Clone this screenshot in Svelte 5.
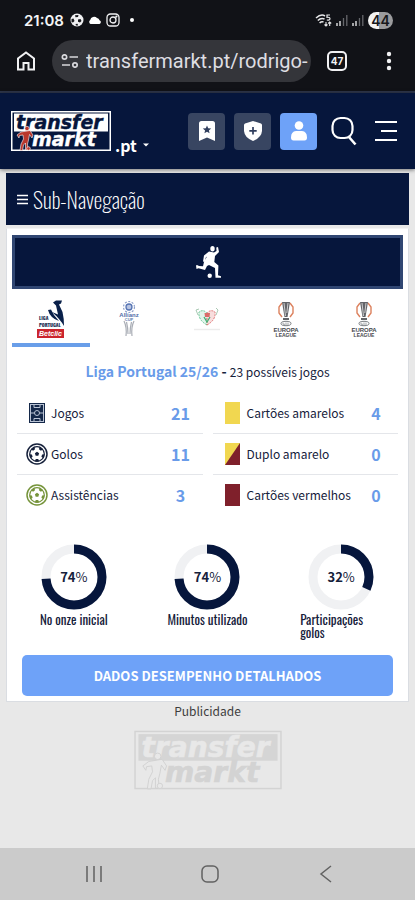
<script>
  let activeTab = $state(0);

  const url = 'transfermarkt.pt/rodrigo-';

  const tabs = [
    { logo: 'liga', label: 'Liga Portugal' },
    { logo: 'allianz', label: 'Allianz Cup' },
    { logo: 'taca', label: 'Taça de Portugal' },
    { logo: 'europa', label: 'Europa League' },
    { logo: 'europa', label: 'Europa League' }
  ];

  const columns = [
    [
      { icon: 'pitch', label: 'Jogos', value: 21 },
      { icon: 'ball', label: 'Golos', value: 11 },
      { icon: 'assist', label: 'Assistências', value: 3 }
    ],
    [
      { icon: 'yellow', label: 'Cartões amarelos', value: 4 },
      { icon: 'double', label: 'Duplo amarelo', value: 0 },
      { icon: 'red', label: 'Cartões vermelhos', value: 0 }
    ]
  ];

  const charts = [
    { label: 'No onze inicial', percent: 74 },
    { label: 'Minutos utilizado', percent: 74 },
    { label: 'Participações golos', percent: 32 }
  ];

  const spokes = [0, 72, 144, 216, 288];
</script>

{#snippet kicker()}
  <path d="M10 21 L19 19.5 L22 24 L21 27 L18.5 23.5 L17.5 29 L16.5 33 L17 39 L14.5 39 L14.5 32 L12.5 34 L11.5 39.5 L9 39.5 L10 33 L12.5 28 L12 24 L8.5 24.5 L8 27 L6 24 Z" />
  <circle cx="16" cy="17.5" r="2.2" />
  <circle cx="17.5" cy="37.5" r="1.8" />
{/snippet}

<div class="screen">
  <header class="phone">
    <div class="status">
      <span class="clock">21:08</span>
      <svg width="14" height="14" viewBox="0 0 14 14">
        <circle cx="7" cy="7" r="6.5" fill="#f1f1f3" />
        <path d="M5 2.2 L8.5 2 L8 4 L5.5 4.2 Z M1.5 6 L3.5 5.5 L4.5 8 L3 9.5 L1.5 9 Z M8 6.5 L10.5 6 L11.5 8 L10 9.5 L8 8.8 Z M5.5 11 L7.5 10.8 L8.2 12.5 L6 12.6 Z" fill="#17181c" />
      </svg>
      <svg width="14" height="10" viewBox="0 0 14 10">
        <path d="M2.5 9 A2.3 2.3 0 0 1 2.2 5 A4 4 0 0 1 9 3 A3 3 0 0 1 11.5 5.2 A2 2 0 0 1 11.5 9 Z" fill="#fff" />
      </svg>
      <svg width="14" height="14" viewBox="0 0 14 14" fill="none" stroke="#f1f1f3" stroke-width="1.3">
        <rect x="1" y="1" width="12" height="12" rx="3.5" />
        <circle cx="7" cy="7" r="3" />
        <circle cx="10.4" cy="3.6" r="0.5" fill="#fff" />
      </svg>
      <span class="dot"></span>
      <span class="spacer"></span>
      <svg width="17" height="13" viewBox="0 0 17 13" fill="none" stroke="#e8e8ea" stroke-width="1.5">
        <path d="M1 4 Q6 -0.5 10 2 M2.8 6.5 Q6 3.5 9.5 5 M4.6 9 Q6.5 7.2 8.5 8" />
        <path d="M15 1 H12 V3.3 Q15 3 15 4.7 Q15 6.3 11.8 6" stroke-width="1.2" />
        <path d="M11 8 V12 M9.5 10.5 L11 12 L12.5 10.5 M14.7 12 V8 M13.2 9.5 L14.7 8 L16.2 9.5" stroke-width="1.1" />
      </svg>
      <svg width="12" height="12" viewBox="0 0 12 12">
        <path d="M1 9 V12 M4 7 V12" stroke="#f1f1f3" stroke-width="1.3" />
        <path d="M7.5 4 V12 M10.8 1 V12" stroke="#66676c" stroke-width="1.3" />
      </svg>
      <svg width="12" height="12" viewBox="0 0 12 12">
        <path d="M1 9 V12 M4 7 V12" stroke="#f1f1f3" stroke-width="1.3" />
        <path d="M7.5 4 V12 M10.8 1 V12" stroke="#66676c" stroke-width="1.3" />
      </svg>
      <span class="battery">44</span>
    </div>

    <div class="browser">
      <button class="plain" aria-label="Página inicial">
        <svg width="20" height="20" viewBox="0 0 20 20" fill="none" stroke="#f1f1f3" stroke-width="2">
          <path d="M2 18.5 V7.5 L10 1.5 L18 7.5 V18.5 H12.5 V12 H7.5 V18.5 Z" />
        </svg>
      </button>
      <label class="address">
        <svg width="18" height="14" viewBox="0 0 18 14" fill="none" stroke="#d8d8dc" stroke-width="1.7">
          <circle cx="3.5" cy="3" r="2.2" />
          <path d="M8.5 3 H17 M1 11 H9" />
          <circle cx="14" cy="11" r="2.2" />
        </svg>
        <input type="text" value={url} aria-label="Endereço" />
      </label>
      <button class="tabcount">47</button>
      <button class="plain" aria-label="Menu do navegador">
        <svg width="6" height="20" viewBox="0 0 6 20" fill="#f1f1f3">
          <circle cx="3" cy="3" r="2.2" />
          <circle cx="3" cy="10" r="2.2" />
          <circle cx="3" cy="17" r="2.2" />
        </svg>
      </button>
    </div>
  </header>

  <nav class="site">
    <a href="/" class="logo" aria-label="Transfermarkt">
      <svg width="100" height="40" viewBox="0 0 100 40">
        <rect width="100" height="40" fill="#fff" />
        <rect x="1.5" y="1.5" width="97" height="37" fill="#06163c" />
        <rect x="3" y="2.5" width="94" height="18" fill="#fff" />
        <text x="5" y="18" class="mark" fill="#06163c" stroke="#06163c" stroke-width="0.4">transfer</text>
        <text x="21" y="35" class="mark" fill="#fff" stroke="#fff" stroke-width="0.4">markt</text>
        <g fill="#b9372c" stroke="#fff" stroke-width="0.6">{@render kicker()}</g>
      </svg>
    </a>
    <button class="country">.pt
      <svg width="6" height="4" viewBox="0 0 6 4"><path d="M0 0.5 H6 L3 3.5 Z" fill="#fff" /></svg>
    </button>
    <div class="tools">
      <button class="tool" aria-label="Favoritos">
        <svg width="16" height="20" viewBox="0 0 16 20">
          <path d="M2.5 0 H13.5 Q16 0 16 2.5 V20 L8 16.5 L0 20 V2.5 Q0 0 2.5 0 Z" fill="#fff" />
          <path d="M8 4.5 L9.2 7.3 L12.2 7.5 L9.9 9.4 L10.6 12.3 L8 10.7 L5.4 12.3 L6.1 9.4 L3.8 7.5 L6.8 7.3 Z" fill="#303e5e" />
        </svg>
      </button>
      <button class="tool" aria-label="Clube">
        <svg width="18" height="20" viewBox="0 0 18 20">
          <path d="M9 0 L17 2.5 Q18 3 18 4 V10 Q17.5 16.5 9 20 Q0.5 16.5 0 10 V4 Q0 3 1 2.5 Z" fill="#fff" />
          <path d="M9 6 V13.5 M5.3 9.8 H12.7" stroke="#303e5e" stroke-width="1.7" />
        </svg>
      </button>
      <button class="tool user" aria-label="Conta">
        <svg width="16" height="20" viewBox="0 0 16 20" fill="#fff">
          <circle cx="8" cy="4.5" r="4.3" />
          <path d="M5 10 H11 Q16 10.5 16 16.5 Q16 19.5 13.5 19.5 H2.5 Q0 19.5 0 16.5 Q0 10.5 5 10 Z" />
        </svg>
      </button>
      <button class="plain" aria-label="Procurar">
        <svg width="26" height="30" viewBox="0 0 26 30" fill="none" stroke="#fff" stroke-width="2.2">
          <rect x="1.5" y="2" width="20" height="20" rx="8" />
          <path d="M17.5 20.5 L24.5 28.5" stroke-width="2.6" />
        </svg>
      </button>
      <button class="plain menu" aria-label="Menu">
        <svg width="22" height="22" viewBox="0 0 22 22" stroke="#fff" stroke-width="2">
          <path d="M0 2 H22 M6 11 H22 M0 20 H22" />
        </svg>
      </button>
    </div>
  </nav>

  <main>
    <button class="subnav">
      <svg width="11" height="11" viewBox="0 0 11 11" stroke="#fff" stroke-width="1.6">
        <path d="M0 1.5 H11 M0 5.5 H11 M0 9.5 H11" />
      </svg>
      Sub-Navegação
    </button>

    <section class="card">
      <div class="position">
        <svg width="26" height="34" viewBox="0 0 26 34" fill="#fff">
          <ellipse cx="17.5" cy="3.8" rx="2.2" ry="2.7" />
          <path d="M14 6.5 L19 7.5 L21.5 6 L21.3 2.5 L23 2 L24 7 L20 11 L19.3 17 L23.4 20.5 L23 30.2 L26 31.2 L26 32.8 L20.5 32.8 L20 23 L14 20 L12 21 L10 25 L3.5 23.2 L1.5 24 L1 20.5 L2 20 L4 21 L8 21.3 L9 17 L12 11.5 L10.8 12.5 L9.6 17 L8 16.5 L9 10.5 Z" />
          <circle cx="14.7" cy="30.8" r="2.2" />
        </svg>
      </div>

      <div class="tabs">
        {#each tabs as tab, i}
          <button class="tab" class:active={activeTab === i} aria-label={tab.label} onclick={() => (activeTab = i)}>
            <svg width="30" height="40" viewBox="0 0 30 40">
              {#if tab.logo === 'liga'}
                <path d="M17 3.5 L20 1.5 H26 L25 4.5 L23 5.5 L26.5 13 Q28 19 28 27 Q24 20 16 13 L22 15.5 L20 6.5 Z" fill="#09204a" />
                <path d="M12 11 L15 10.5 L18 16 L23 22 Q14 19 12 11 Z" fill="#09204a" />
                <text x="3" y="21" class="liga" fill="#16294e">LIGA</text>
                <text x="3" y="28" class="liga" fill="#16294e">PORTUGAL</text>
                <rect x="1" y="30" width="27" height="9" fill="#cb252d" />
                <text x="3" y="37" class="betclic" fill="#fff">Betclic</text>
              {:else if tab.logo === 'allianz'}
                <circle cx="15" cy="8" r="3" fill="#b9c5e2" stroke="#5573b3" stroke-width="1.3" />
                <circle cx="15" cy="8" r="5.5" fill="none" stroke="#8ea0cb" stroke-width="1.2" stroke-dasharray="2 1.5" />
                <text x="15" y="18" class="tiny" fill="#526da8" text-anchor="middle">Allianz</text>
                <text x="15" y="22" class="cup" fill="#667db0" text-anchor="middle">CUP</text>
                <path d="M10 22 Q13 28 12 37 M12.5 23 Q14 29 14 35 M17.5 23 Q16 29 16 35 M20 22 Q17 28 18 37" fill="none" stroke="#a9adb5" stroke-width="1.2" />
              {:else if tab.logo === 'taca'}
                <path d="M15 26 Q6 21 7 13 Q11 10 15 14 Z" fill="#e2f4ea" stroke="#61c690" stroke-width="1" stroke-dasharray="2 1" />
                <path d="M15 26 Q24 21 23 13 Q19 10 15 14 Z" fill="#f8dddd" stroke="#df7273" stroke-width="1" stroke-dasharray="2 1" />
                <path d="M6 16 L4 11 L7 10 M24 16 L26 11 L24 9" fill="none" stroke="#94bba1" stroke-width="0.8" />
                <path d="M12.5 14 H18 L17.5 18 H13 Z" fill="#da6c69" />
                <path d="M12 18 L15 23 L18 18" fill="none" stroke="#42ad74" stroke-width="1.3" />
                <path d="M2 30.5 H28" stroke="#ececec" stroke-width="1.5" />
              {:else}
                <path d="M11 4 L8 8 V14 L11 18 M19 4 L22 8 V14 L19 18" fill="none" stroke="#dc815d" stroke-width="1.4" />
                <path d="M11 3 H19 L17.5 12 L16.5 18 H13.5 L12.5 12 Z" fill="#626469" />
                <path d="M13 4 L14.5 17 M17 4 L15.8 14" stroke="#e8e8e8" stroke-width="0.8" />
                <path d="M12 20 H18" stroke="#33353a" stroke-width="1.5" />
                <ellipse cx="15" cy="24.5" rx="5" ry="2.2" fill="none" stroke="#777b80" stroke-width="1" />
                <path d="M12 23.5 V25 Q13 26 14 25 M15 23.5 V26 M17 23.5 V26" fill="none" stroke="#777b80" stroke-width="0.7" />
                <text x="15" y="33" class="tiny" fill="#46484d" text-anchor="middle">EUROPA</text>
                <text x="15" y="38" class="tiny small" fill="#46484d" text-anchor="middle">LEAGUE</text>
              {/if}
            </svg>
          </button>
        {/each}
      </div>

      <h2><a href="/liga">Liga Portugal 25/26</a> - <span>23 possíveis jogos</span></h2>

      <div class="stats">
        {#each columns as column}
          <dl>
            {#each column as stat}
              <div class="stat">
                <dt>
                  <svg width="22" height="22" viewBox="0 0 22 22">
                    {#if stat.icon === 'pitch'}
                      <rect x="3" y="1" width="16" height="20" fill="#142849" />
                      <g fill="none" stroke="#b9c3d4" stroke-width="1">
                        <rect x="4.5" y="2.5" width="13" height="17" />
                        <path d="M4 11 H18 M8 2.5 V5.5 H14 V2.5 M8 19.5 V16.5 H14 V19.5" />
                        <circle cx="11" cy="11" r="2.5" fill="#142849" />
                      </g>
                    {:else if stat.icon === 'ball' || stat.icon === 'assist'}
                      <g class={stat.icon} fill="none">
                        <circle cx="11" cy="11" r="10" stroke-width="1.5" />
                        <circle cx="11" cy="11" r="7.3" stroke-width="1.2" />
                        <path class="fill" d="M11 8.8 L13.1 10.3 L12.3 12.8 H9.7 L8.9 10.3 Z" />
                        {#each spokes as angle}
                          <path class="fill" d="M8.8 3.6 H13.2 L12.2 6 H9.8 Z" transform="rotate({angle + 36} 11 11)" />
                        {/each}
                      </g>
                    {:else}
                      <rect x="3" width="15" height="22" fill={stat.icon === 'red' ? '#7f202b' : '#f1d750'} />
                      {#if stat.icon === 'double'}
                        <path d="M18 0 V22 H3 Z" fill="#7f202b" />
                      {/if}
                    {/if}
                  </svg>
                  {stat.label}
                </dt>
                <dd>{stat.value}</dd>
              </div>
            {/each}
          </dl>
        {/each}
      </div>

      <div class="charts">
        {#each charts as chart}
          <div class="chart">
            <div class="ring">
              <svg width="66" height="66" viewBox="0 0 66 66" fill="none" stroke-width="9">
                <circle cx="33" cy="33" r="28" stroke="#f0f1f3" />
                <circle cx="33" cy="33" r="28" stroke="#06163c" pathLength="100" stroke-dasharray="{chart.percent} 100" transform="rotate(-90 33 33)" />
              </svg>
              <span class="percent"><b>{chart.percent}</b>%</span>
            </div>
            <p>{chart.label}</p>
          </div>
        {/each}
      </div>

      <a class="details" href="/desempenho">DADOS DESEMPENHO DETALHADOS</a>
    </section>

    <aside>
      <p>Publicidade</p>
      <svg width="148" height="60" viewBox="0 0 100 40">
        <rect x="0.7" y="0.7" width="98.6" height="38.6" fill="none" stroke="#d3d3d3" stroke-width="1" />
        <rect x="3" y="2.5" width="94" height="18" fill="#d5d5d5" />
        <text x="5" y="18" class="mark" fill="#e8e8e8" stroke="#e8e8e8" stroke-width="0.4">transfer</text>
        <text x="21" y="35" class="mark" fill="#d3d3d3" stroke="#d3d3d3" stroke-width="0.4">markt</text>
        <g fill="#e8e8e8" stroke="#d0d0d0" stroke-width="0.6">{@render kicker()}</g>
      </svg>
    </aside>
  </main>

  <footer>
    <button class="plain" aria-label="Recentes">
      <svg width="18" height="18" viewBox="0 0 18 18" stroke="#626262" stroke-width="1.5">
        <path d="M2 1 V17 M9 1 V17 M16 1 V17" />
      </svg>
    </button>
    <button class="plain" aria-label="Início">
      <svg width="18" height="18" viewBox="0 0 18 18" fill="none" stroke="#626262" stroke-width="1.5">
        <rect x="1" y="1" width="16" height="16" rx="5" />
      </svg>
    </button>
    <button class="plain" aria-label="Voltar">
      <svg width="18" height="18" viewBox="0 0 18 18" fill="none" stroke="#626262" stroke-width="1.5">
        <path d="M14 1 L4 9 L14 17" />
      </svg>
    </button>
  </footer>
</div>

<style>
  :global(body) {
    background: #e8e8e8;
  }

  .screen {
    min-height: 100vh;
    display: flex;
    flex-direction: column;
    font-family: "Source Sans Pro", "Noto Sans CJK SC", sans-serif;
    color: #16213b;
  }

  button {
    margin: 0;
    padding: 0;
    border: 0;
    background: none;
    font-family: inherit;
    color: inherit;
    cursor: pointer;
  }

  a {
    text-decoration: none;
  }

  svg {
    display: block;
    flex: none;
  }

  .plain {
    display: flex;
  }

  .phone {
    background: #111217;
    border-bottom: 2px solid #2d3549;
    font-family: Inter, Roboto, sans-serif;
    color: #f4f4f6;
  }

  .status {
    display: flex;
    align-items: center;
    gap: 4px;
    height: 40px;
    padding: 0 22px 0 24px;
  }

  .clock {
    margin-right: 2px;
    font-size: 15px;
    font-weight: 600;
  }

  .dot {
    width: 4px;
    height: 4px;
    margin-left: 6px;
    border-radius: 50%;
    background: #fff;
  }

  .spacer {
    flex: 1;
  }

  .battery {
    width: 25px;
    border-radius: 9px;
    background: linear-gradient(90deg, #f3f3f3 44%, #9b9b9d 44%);
    font-size: 14px;
    line-height: 17px;
    font-weight: 600;
    text-align: center;
    color: #17181c;
  }

  .browser {
    display: flex;
    align-items: center;
    padding: 0 23px 9px 16px;
  }

  .address {
    flex: 1;
    display: flex;
    align-items: center;
    gap: 7px;
    height: 42px;
    min-width: 0;
    margin: 0 16px;
    padding-left: 9px;
    border-radius: 21px;
    background: #34353a;
  }

  .address input {
    flex: 1;
    min-width: 0;
    padding: 0;
    border: 0;
    outline: 0;
    background: none;
    font-family: Roboto, sans-serif;
    font-size: 20px;
    color: #dedee2;
  }

  .tabcount {
    width: 20px;
    height: 20px;
    box-sizing: border-box;
    margin-right: 39px;
    border: 2px solid #f1f1f3;
    border-radius: 5px;
    font-size: 10px;
    font-weight: 700;
  }

  .site {
    display: flex;
    align-items: center;
    height: 76px;
    padding: 0 18px 0 11px;
    background: #06163c;
    box-shadow: 0 1px 4px rgba(0, 0, 0, 0.5);
  }

  .mark {
    font-family: "DejaVu Sans", sans-serif;
    font-size: 19px;
    font-weight: 700;
    font-style: oblique;
  }

  .country {
    display: flex;
    align-items: center;
    gap: 6px;
    align-self: flex-end;
    margin: 0 0 12px 4px;
    font-size: 16px;
    line-height: 24px;
    font-weight: 700;
    color: #fff;
  }

  .tools {
    flex: 1;
    display: flex;
    align-items: center;
    justify-content: flex-end;
    gap: 9px;
  }

  .tool {
    display: flex;
    align-items: center;
    justify-content: center;
    width: 37px;
    height: 37px;
    border-radius: 4px;
    background: #384561;
  }

  .tool.user {
    margin-right: 5px;
    background: #6ea2f8;
  }

  .menu {
    margin-left: 9px;
  }

  main {
    flex: 1;
    padding: 4px 6px 0;
  }

  .subnav {
    display: flex;
    align-items: center;
    gap: 5px;
    width: 100%;
    height: 52px;
    padding-left: 11px;
    background: #06163c;
    font-family: Oswald, "Liberation Sans Narrow", sans-serif;
    font-size: 22px;
    font-weight: 200;
    color: #fff;
  }

  .card {
    margin-top: 3px;
    padding: 6px 5px 5px;
    border: 1px solid #dadde2;
    border-top-color: #f3f3f3;
    background: #fff;
  }

  .position {
    display: flex;
    justify-content: center;
    align-items: center;
    height: 48px;
    border: 3px solid #304672;
    background: #06163c;
  }

  .tabs {
    display: grid;
    grid-template-columns: repeat(5, 1fr);
    margin-top: 10px;
  }

  .tab {
    display: flex;
    justify-content: center;
    padding-bottom: 4px;
    border-bottom: 4px solid transparent;
  }

  .tab.active {
    border-bottom-color: #699ee9;
  }

  .tiny {
    font: 700 6px "Liberation Sans", sans-serif;
  }

  .tiny.small {
    font-size: 5px;
  }

  .liga {
    font: 700 5px Oswald, sans-serif;
  }

  .betclic {
    font: italic 700 7px "Liberation Sans", sans-serif;
  }

  .cup {
    font: 700 4px "Liberation Sans", sans-serif;
  }

  h2 {
    margin: 12px 0 9px;
    font-size: 14px;
    line-height: 24px;
    font-weight: 700;
    text-align: center;
  }

  h2 a {
    color: #699be9;
  }

  h2 span {
    font-size: 12px;
    font-weight: 400;
  }

  .stats {
    display: grid;
    grid-template-columns: repeat(2, minmax(0, 1fr));
    gap: 10px;
    padding: 0 5px;
  }

  dl {
    margin: 0;
  }

  .stat {
    display: flex;
    align-items: center;
    justify-content: space-between;
    height: 40px;
    padding-left: 9px;
    border-bottom: 1px solid #e4e6ea;
  }

  .stat:last-child {
    border-bottom: 0;
  }

  dt {
    display: flex;
    align-items: center;
    gap: 3px;
    font-size: 12px;
    line-height: 20px;
    white-space: nowrap;
  }

  dd {
    width: 44px;
    margin: 0;
    font-size: 16px;
    line-height: 24px;
    font-weight: 700;
    text-align: center;
    color: #699be9;
  }

  .ball {
    stroke: #16213b;
  }

  .assist {
    stroke: #76943b;
  }

  .ball .fill {
    fill: #16213b;
    stroke: none;
  }

  .assist .fill {
    fill: #76943b;
    stroke: none;
  }

  .charts {
    display: grid;
    grid-template-columns: repeat(3, 1fr);
    margin: 29px -5px 0;
  }

  .chart {
    display: flex;
    flex-direction: column;
    align-items: center;
  }

  .ring {
    display: grid;
    place-items: center;
  }

  .ring svg,
  .percent {
    grid-area: 1 / 1;
  }

  .percent {
    font-size: 13px;
    line-height: 20px;
  }

  .chart p {
    max-width: 82px;
    margin: 3px 0 0;
    font-family: Oswald, "Liberation Sans Narrow", sans-serif;
    font-size: 13px;
    line-height: 13px;
  }

  .details {
    display: block;
    margin: 16px 10px 0;
    border-radius: 5px;
    background: #6ea2f8;
    font-size: 13px;
    line-height: 41px;
    font-weight: 700;
    text-align: center;
    color: #fff;
  }

  aside {
    display: flex;
    flex-direction: column;
    align-items: center;
    gap: 10px;
  }

  aside p {
    margin: 0;
    font-size: 12px;
    line-height: 18px;
    color: #3d3d3d;
  }

  footer {
    display: flex;
    justify-content: center;
    align-items: center;
    gap: 98px;
    height: 52px;
    margin-top: 10px;
    padding-left: 4px;
    background: #cbcbcb;
  }
</style>
